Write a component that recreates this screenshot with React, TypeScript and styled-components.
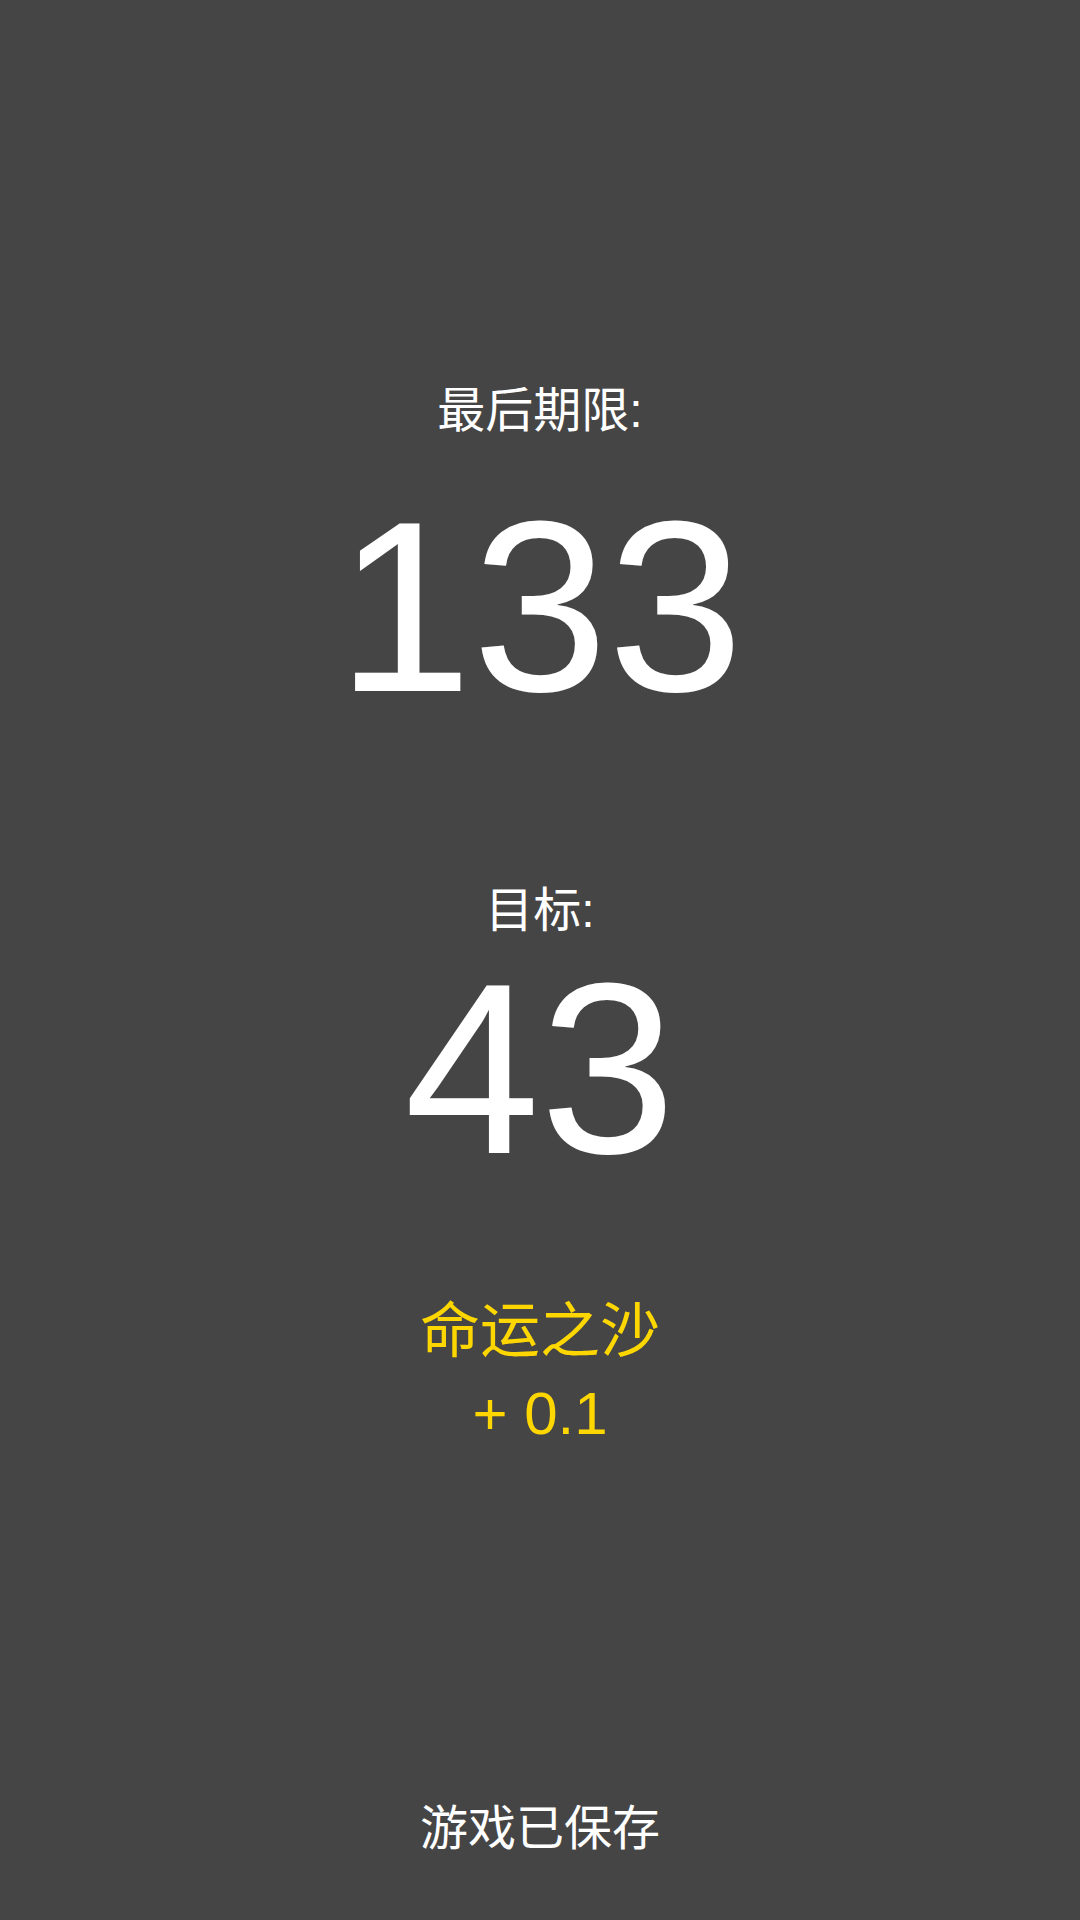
import styled, { createGlobalStyle } from "styled-components";

const GlobalStyle = createGlobalStyle`
    html, body {
        margin: 0;
        padding: 0;
        background: #454545;
    }
    #root {
        min-height: 100vh;
    }
`

const Screen = styled.div`
    display: flex;
    flex-direction: column;
    align-items: center;
    box-sizing: border-box;
    width: 1080px;
    height: 1920px;
    padding: 387px 0 67px;
    background: #454545;
    font-family: "Liberation Sans", "Noto Sans CJK SC", sans-serif;
    color: #FFFFFF;
    text-align: center;
`

const Label = styled.div<{ $gap: number }>`
    margin-top: ${props => props.$gap}px;
    font-size: 48px;
    line-height: 48px;
`

const BigNumber = styled.div<{ $gap: number }>`
    margin-top: ${props => props.$gap}px;
    font-size: 244px;
    line-height: 244px;
`

const Bonus = styled.div<{ $gap: number }>`
    margin-top: ${props => props.$gap}px;
    font-size: 60px;
    line-height: 60px;
    color: #FFD700;
`

const Footer = styled.div`
    margin-top: auto;
    font-size: 48px;
    line-height: 48px;
`

const App = () => {
    return (
        <>
            <GlobalStyle/>
            <Screen>
                <Label $gap={0}>最后期限:</Label>
                <BigNumber $gap={50}>133</BigNumber>
                <Label $gap={158}>目标:</Label>
                <BigNumber $gap={12}>43</BigNumber>
                <Bonus $gap={111}>命运之沙</Bonus>
                <Bonus $gap={22}>+ 0.1</Bonus>
                <Footer>游戏已保存</Footer>
            </Screen>
        </>
    );
};

export default App;
